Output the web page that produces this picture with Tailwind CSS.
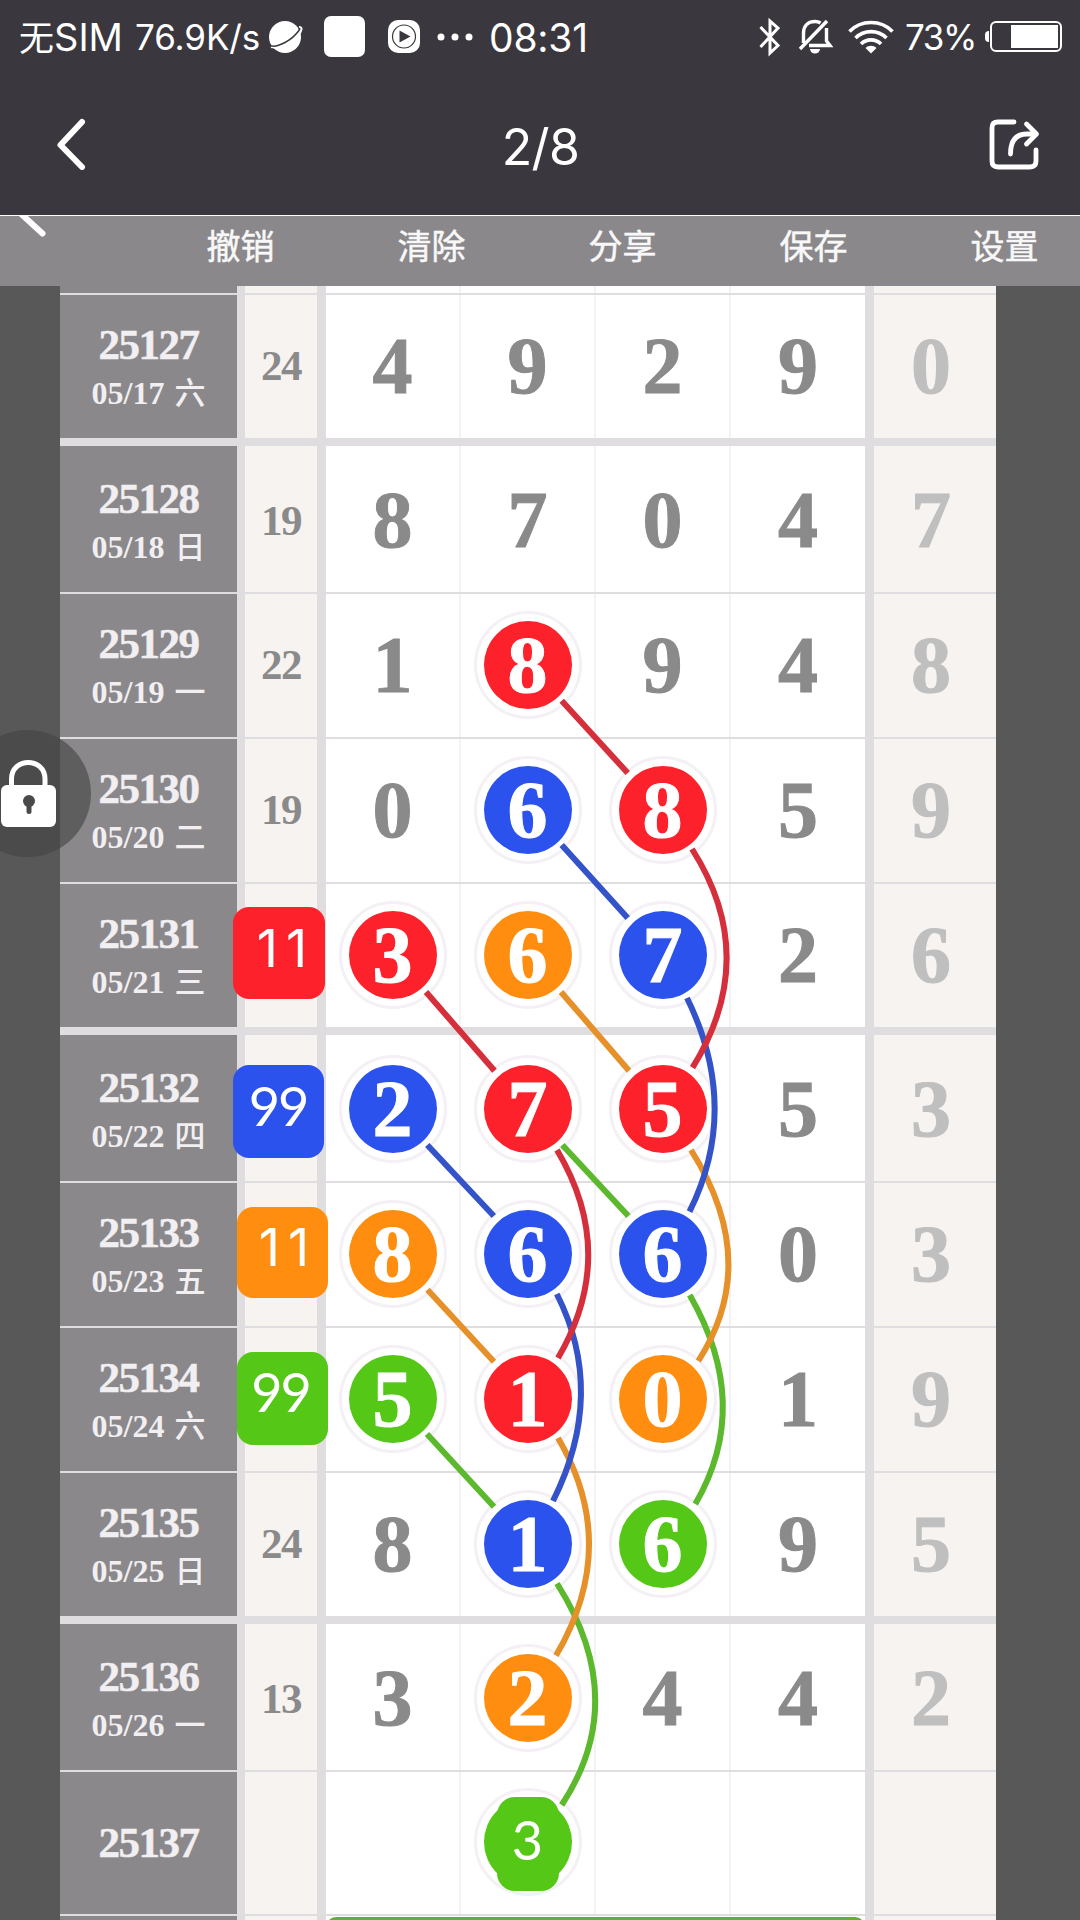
<!DOCTYPE html>
<html lang="zh-CN">
<head>
    <meta charset="UTF-8">
    <meta name="viewport" content="width=device-width, initial-scale=1.0">
    <title>2/8</title>
    <script src="https://cdn.jsdelivr.net/npm/@tailwindcss/browser@4"></script>
</head>
<body class="relative w-[1080px] h-[1920px] overflow-hidden bg-[#585858] font-['Inter','Noto_Sans_CJK_SC',sans-serif]">
    <!-- status bar + title -->
    <header class="h-[216px] bg-[#3a383e] text-white border-b border-white">
        <div class="flex items-center h-[73px] pl-[19px] whitespace-nowrap">
            <span class="w-[116px] shrink-0 pt-[2px] text-[38px] tracking-[0px]"><span class="text-[35px]">无</span>SIM</span>
            <span class="w-[133px] shrink-0 pt-[1px] text-[35px] tracking-[-0.1px]">76.9K/s</span>
            <svg class="w-[36px] h-[36px] shrink-0" viewBox="0 0 36 36">
                <circle cx="17" cy="18" r="16" fill="white"/>
                <path d="M31 8 C35 8 34 12 30 16 C23 23 9 30 3 28" fill="none" stroke="white" stroke-width="2"/>
                <path d="M1.500 26 C6 30 21 23 28 15 C31 12 32 10 31 9" fill="none" stroke="#3a383e" stroke-width="1.600"/>
            </svg>
            <span class="w-[41px] h-[41px] shrink-0 ml-[20px] bg-white rounded-[7px]"></span>
            <svg class="w-[32px] h-[33px] shrink-0 ml-[23px]" viewBox="0 0 32 33">
                <rect width="32" height="33" rx="10" fill="white"/>
                <circle cx="16" cy="16.500" r="11.500" fill="none" stroke="#3a383e" stroke-width="1.200"/>
                <path d="M11.500 10.500 L22.500 16.500 L11.500 22.500 Z" fill="#3a383e"/>
            </svg>
            <svg class="w-[36px] h-[8px] shrink-0 ml-[17px]" viewBox="0 0 36 8" fill="white">
                <circle cx="4" cy="4" r="3.500"/><circle cx="18" cy="4" r="3.500"/><circle cx="32" cy="4" r="3.500"/>
            </svg>
            <span class="w-[270px] shrink-0 ml-[16px] pt-[3px] text-[39px] tracking-[-0.2px]">08:31</span>
            <svg class="w-[22px] h-[40px] shrink-0" viewBox="0 0 22 40" fill="none" stroke="white" stroke-width="3">
                <path d="M1.500 10 L19 28.500 L11 36 V4 L19 11 L1.500 30"/>
            </svg>
            <svg class="w-[36px] h-[36px] shrink-0 ml-[17px]" viewBox="0 0 36 36" fill="none" stroke="white" stroke-width="3.400">
                <path d="M2 30 L29 2"/>
                <path d="M5.500 24 V14 C5.500 6 11 2.500 17 2.500 C19.500 2.500 21 3 22.500 4"/>
                <path d="M28.500 9 V22 L32 26.500 H11"/>
                <path d="M12 30 H22 C21.500 36 12.500 36 12 30 Z" fill="white" stroke="none"/>
            </svg>
            <svg class="w-[46px] h-[34px] shrink-0 ml-[14px]" viewBox="0 0 46 34" fill="none" stroke="white" stroke-width="3.600">
                <path d="M1.500 11.500 C13 -0.500 33 -0.500 44.500 11.500"/>
                <path d="M7.500 18 C16 9.500 30 9.500 38.500 18"/>
                <path d="M13 24 C18.500 18.500 27.500 18.500 33 24"/>
                <path d="M17.500 28 C20.500 25 25.500 25 28.500 28 L23 33.500 Z" fill="white" stroke="none"/>
            </svg>
            <span class="w-[80px] shrink-0 ml-[11px] pt-[2px] text-[35px] tracking-[-1.4px]">73%</span>
            <span class="w-[4px] h-[11px] shrink-0 bg-white rounded-l-[4px]"></span>
            <span class="w-[72px] h-[31px] shrink-0 ml-[1px] border-2 border-white rounded-[6px] flex items-center justify-end pr-[2px]">
                <span class="w-[47px] h-[23px] bg-white"></span>
            </span>
        </div>
        <div class="flex items-center justify-between h-[142px] pl-[55px] pr-[39px]">
            <svg class="w-[32px] h-[52px]" viewBox="0 0 32 52" fill="none" stroke="white" stroke-width="6" stroke-linecap="round" stroke-linejoin="round">
                <path d="M27 4 L5.500 27 L27 49"/>
            </svg>
            <h1 class="text-[50px] leading-none pt-[5px] pl-[5px] tracking-[-0.7px]">2/8</h1>
            <svg class="w-[52px] h-[52px]" viewBox="0 0 52 52" fill="none" stroke="white" stroke-width="4.800" stroke-linecap="round" stroke-linejoin="round">
                <path d="M25 4 H9 Q3 4 3 10 V43 Q3 49 9 49 H41 Q47 49 47 43 V32"/>
                <path d="M21.500 36 C21.500 23 27 16 38 16 H46"/>
                <path d="M37.500 6 L47.500 16 L37.500 26"/>
            </svg>
        </div>
    </header>

    <nav class="flex h-[70px] bg-[#8b888b] text-[#f8f8f8] text-[34px] leading-[62px] text-center [-webkit-text-stroke:0.5px]">
        <svg class="w-[145px] h-[70px] shrink-0" viewBox="0 0 145 70" fill="none" stroke="white" stroke-width="6" stroke-linecap="round">
            <path d="M19 -4 L42.500 17.500"/>
        </svg>
        <span class="w-[191px] shrink-0">撤销</span>
        <span class="w-[191px] shrink-0">清除</span>
        <span class="w-[191px] shrink-0">分享</span>
        <span class="w-[191px] shrink-0">保存</span>
        <span class="w-[191px] shrink-0">设置</span>
    </nav>

    <main id="table" class="w-[936px] ml-[60px] font-['Liberation_Serif','Noto_Sans_CJK_SC',serif] font-bold"></main>

    <!-- hand drawn connections -->
    <svg class="absolute left-0 top-0 w-[1080px] h-[1920px]" viewBox="0 0 1080 1920" fill="none" stroke-width="6">
        <g stroke="#5cb82c">
            <path d="M557 1583.500 Q631 1700 561.700 1805"/>
            <path d="M689.700 1295 Q753 1405 695.300 1504"/>
            <path d="M562.300 1145 L628.400 1216"/>
            <path d="M427 1434 L494 1506.700"/>
        </g>
        <g stroke="#e6902a">
            <path d="M561 992 L629 1070.700"/>
            <path d="M691 1150 Q762 1262 698.300 1361"/>
            <path d="M427.500 1289.700 L494 1361.700"/>
            <path d="M558 1438 Q621 1545 556 1655.500"/>
        </g>
        <g stroke="#3453c8">
            <path d="M561.700 845 L627.700 918"/>
            <path d="M687 998 Q741 1108 689.500 1211.700"/>
            <path d="M427.300 1145 L493.800 1216"/>
            <path d="M556.800 1294 Q607 1393 553 1501"/>
        </g>
        <g stroke="#d62f3c">
            <path d="M561.700 700.700 L627.700 773"/>
            <path d="M692 849 Q761 957 692.500 1067.700"/>
            <path d="M426 992 L494.500 1070.700"/>
            <path d="M557 1150 Q619 1254 558 1358"/>
        </g>
    </svg>

    <!-- floating lock -->
    <div class="absolute left-[-36px] top-[730px] w-[127px] h-[127px] rounded-full bg-[#414241]/60">
        <svg class="absolute left-[36px] top-[28px] w-[58px] h-[72px]" viewBox="0 0 58 72">
            <path d="M11.500 30 V21 C11.500 -1 45 -1 45 21 V30" fill="none" stroke="white" stroke-width="5"/>
            <rect x="1" y="27" width="55" height="42" rx="6" fill="white"/>
            <circle cx="29" cy="43" r="6" fill="#4a4a4a"/>
            <path d="M29 43 V53.500" stroke="#4a4a4a" stroke-width="5" stroke-linecap="round"/>
        </svg>
    </div>

    <script>
        const fill = {
            r: 'bg-[#fc212a]',
            b: 'bg-[#2b52ec]',
            o: 'bg-[#ff8d10]',
            g: 'bg-[#54c717]'
        };

        // position of the coloured squares inside the sum column
        const badges = {
            '25131': ['r', '11', "left-[-12px] top-[23px] w-[92px] h-[92px] pb-[8px] pl-[14px] font-['Inter'] text-[52px] tracking-[8px]"],
            '25132': ['b', '99', "left-[-12px] top-[30px] w-[91px] h-[93px] pb-[12px] pr-[1px] font-['Lato'] text-[54px] tracking-[-2px]"],
            '25133': ['o', '11', "left-[-8px] top-[24px] w-[91px] h-[91px] pb-[9px] pl-[11px] font-['Inter'] text-[52px] tracking-[8px]"],
            '25134': ['g', '99', "left-[-8px] top-[24px] w-[91px] h-[93px] pb-[13px] pr-[4px] font-['Lato'] text-[54px] tracking-[-2px]"]
        };

        // issue, date, weekday, sum, digits (a letter marks a coloured ball), last digit, row height
        const rows = [
            ['25127', '05/17', '六', '24', ['4', '9', '2', '9'], '0', 'h-[151px] border-b-8'],
            ['25128', '05/18', '日', '19', ['8', '7', '0', '4'], '7', 'h-[148px] border-b-2'],
            ['25129', '05/19', '一', '22', ['1', '8r', '9', '4'], '8', 'h-[145px] border-b-2'],
            ['25130', '05/20', '二', '19', ['0', '6b', '8r', '5'], '9', 'h-[145px] border-b-2'],
            ['25131', '05/21', '三', '', ['3r', '6o', '7b', '2'], '6', 'h-[151px] border-b-8'],
            ['25132', '05/22', '四', '', ['2b', '7r', '5r', '5'], '3', 'h-[148px] border-b-2'],
            ['25133', '05/23', '五', '', ['8o', '6b', '6b', '0'], '3', 'h-[145px] border-b-2'],
            ['25134', '05/24', '六', '', ['5g', '1r', '0o', '1'], '9', 'h-[145px] border-b-2'],
            ['25135', '05/25', '日', '24', ['8', '1b', '6g', '9'], '5', 'h-[151px] border-b-8'],
            ['25136', '05/26', '一', '13', ['3', '2o', '4', '4'], '2', 'h-[148px] border-b-2'],
            ['25137', '', '', '', ['', '3g', '', ''], '', 'h-[144px] border-b-2']
        ];

        function ball(value, issue) {
            if (value.length < 2) return value;
            if (issue === '25137') {
                return `<div class="relative w-[108px] h-[108px] shrink-0 rounded-full border-[3px] border-[#f4f0f5] bg-white flex items-center justify-center">
                    <span class="w-[88px] h-[88px] rounded-full bg-[#54c717]"></span>
                    <span class="absolute left-[20px] top-[6px] w-[62px] h-[94px] rounded-[18px] bg-[#54c717] flex items-center justify-center pb-[9px] font-['Lato'] font-normal text-[54px] text-white [-webkit-text-stroke:0px]">${value[0]}</span>
                </div>`;
            }
            return `<div class="w-[108px] h-[108px] shrink-0 rounded-full border-[3px] border-[#f4f0f5] bg-white flex items-center justify-center">
                <span class="w-[88px] h-[88px] rounded-full text-white flex items-center justify-center ${fill[value[1]]}">${value[0]}</span>
            </div>`;
        }

        function badge(issue) {
            if (!badges[issue]) return '';
            const [color, text, box] = badges[issue];
            return `<div class="absolute z-10 rounded-[16px] flex items-center justify-center font-normal text-white ${fill[color]} ${box}">${text}</div>`;
        }

        function row([issue, date, day, sum, digits, last, size]) {
            // rows under a thick rule sit a little lower
            const tall = size.includes('148');
            const shift = tall ? 'pt-[2px]' : 'pb-[2px]';
            return `<div class="grid grid-cols-[185px_81px_135px_135px_135px_143px_122px] border-[#dfdddf] leading-none ${size}">
                <div class="bg-[#8b888b] text-[#f1eff1] border-r-8 border-[#dfdddf] flex flex-col items-center justify-center">
                    <div class="text-[43px] leading-[50px] tracking-[-1.5px] [-webkit-text-stroke:0.5px] ${date ? (tall ? 'mt-[6px]' : 'mt-[3px]') : ''}">${issue}</div>
                    ${date ? `<div class="text-[32px] h-[46px] flex items-center">${date}<span class="ml-[10px] text-[31px] font-medium">${day}</span></div>` : ''}
                </div>
                <div class="relative bg-[#f6f3f0] text-[#8a8a8a] border-r-[9px] border-[#dfdddf] flex items-center justify-center text-[43px] tracking-[-1.5px] ${shift}">${sum}${badge(issue)}</div>
                ${digits.map((d, i) => `<div class="bg-white text-[#8a8a8a] text-[80px] [-webkit-text-stroke:1px] flex items-center justify-center ${shift} ${i < 3 ? 'border-r-2 border-[#f4f3f4]' : 'border-r-[9px] border-[#dfdddf]'}">${ball(d, issue)}</div>`).join('')}
                <div class="bg-[#f6f3f0] text-[#bfbfbf] text-[80px] [-webkit-text-stroke:1px] flex items-center justify-center pr-[8px] ${shift}">${last}</div>
            </div>`;
        }

        // slice of the previous row under the toolbar
        const cut = `<div class="grid grid-cols-[185px_81px_135px_135px_135px_143px_122px] h-[9px] border-b-2 border-[#dfdddf]">
            <div class="bg-[#8b888b] border-r-8 border-[#dfdddf]"></div>
            <div class="bg-[#f6f3f0] border-r-[9px] border-[#dfdddf]"></div>
            <div class="bg-white border-r-2 border-[#f4f3f4]"></div>
            <div class="bg-white border-r-2 border-[#f4f3f4]"></div>
            <div class="bg-white border-r-2 border-[#f4f3f4]"></div>
            <div class="bg-white border-r-[9px] border-[#dfdddf]"></div>
            <div class="bg-[#f6f3f0]"></div>
        </div>`;

        // top edge of the next row
        const next = `<div class="grid grid-cols-[185px_81px_548px_122px] h-[10px]">
            <div class="bg-[#8b888b] border-r-8 border-[#dfdddf]"></div>
            <div class="bg-[#f6f3f0] border-r-[9px] border-[#dfdddf]"></div>
            <div class="bg-white border-r-[9px] border-[#dfdddf]"><div class="h-[30px] mt-[1px] rounded-[10px] bg-[#5fb135]"></div></div>
            <div class="bg-[#f6f3f0]"></div>
        </div>`;

        document.getElementById('table').innerHTML = cut + rows.map(row).join('') + next;
    </script>
</body>
</html>
